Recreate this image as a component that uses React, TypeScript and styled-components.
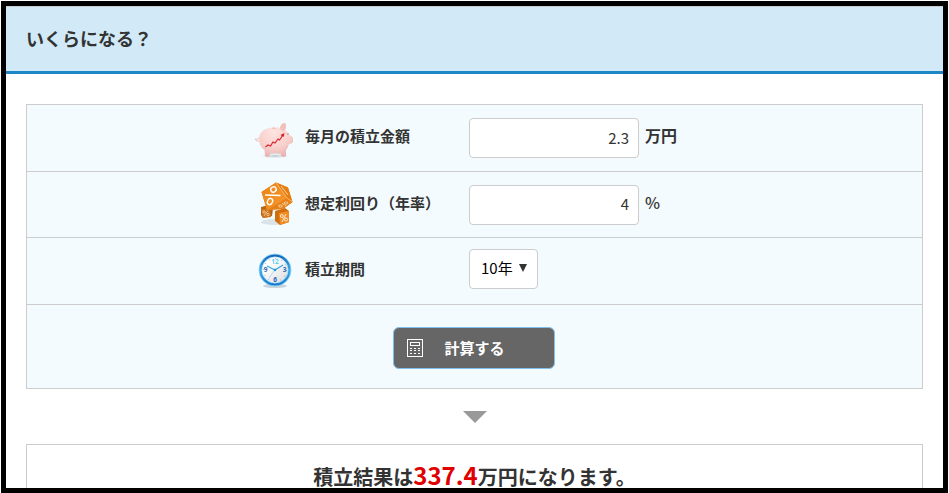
import React, { useState } from "react";
import styled, { createGlobalStyle } from "styled-components";

const GlobalStyle = createGlobalStyle`
  *, *::before, *::after { box-sizing: border-box; }
  body {
    margin: 0;
    background: #fff;
    color: #333;
    font-family: "Noto Sans CJK JP", sans-serif;
  }
  button, input, select { font-family: inherit; }
`;

const Frame = styled.main`
  height: calc(100vh - 1px);
  margin: 1px 1px 0;
  border: 5px solid #000;
  overflow: hidden;
`;

const Header = styled.header`
  padding: 18px 20px 19px;
  border-top: 1px solid #ccc;
  border-bottom: 3px solid #1e88c7;
  background: #d2eaf7;
`;

const Title = styled.h1`
  margin: 0;
  font-size: 18px;
  line-height: 27px;
  font-weight: 700;
`;

const Content = styled.div`
  padding: 30px 20px;
`;

const Panel = styled.form`
  border: 1px solid #ccc;
  background: #f3fbff;
`;

const Row = styled.div<{ $compact?: boolean }>`
  display: grid;
  grid-template-columns: 1fr 1fr;
  align-items: center;
  min-height: ${(p) => (p.$compact ? 66 : 67)}px;
  padding-right: 11px;
  border-bottom: 1px solid #ccc;
`;

const Label = styled.label`
  display: flex;
  align-items: center;
  justify-self: end;
  gap: 10px;
  width: 214px;
  font-size: 15px;
  line-height: 24px;
  font-weight: 700;

  span { padding-bottom: 4px; }
`;

const IconBox = styled.svg`
  flex: none;
  width: 40px;
  height: 48px;
`;

const Field = styled.div<{ $raised?: boolean }>`
  display: flex;
  align-items: center;
  gap: 6px;
  padding-bottom: ${(p) => (p.$raised ? 4 : 0)}px;
`;

const NumberInput = styled.input`
  width: 170px;
  height: 40px;
  padding: 0 9px 2px;
  border: 1px solid #ccc;
  border-radius: 4px;
  background: #fff;
  color: #333;
  font-size: 15px;
  text-align: right;
`;

const Unit = styled.span<{ $strong?: boolean }>`
  padding-bottom: 6px;
  font-size: 16px;
  line-height: 24px;
  font-weight: ${(p) => (p.$strong ? 700 : 500)};
`;

const SelectWrap = styled.div`
  position: relative;
  display: flex;

  svg {
    position: absolute;
    right: 10px;
    top: 15px;
    width: 10px;
    height: 8px;
    pointer-events: none;
  }
`;

const Select = styled.select`
  appearance: none;
  height: 40px;
  padding: 0 24px 3px 11px;
  border: 1px solid #ccc;
  border-radius: 4px;
  background: #fff;
  color: #000;
  font-size: 15px;
`;

const Actions = styled.div`
  display: flex;
  justify-content: center;
  padding: 22px 2px 19px 0;
`;

const SubmitButton = styled.button`
  display: flex;
  align-items: center;
  gap: 22px;
  width: 162px;
  height: 42px;
  padding: 0 13px;
  border: 1px solid #7fc0ee;
  border-radius: 6px;
  background: #666;
  color: #fff;
  font-size: 15px;
  font-weight: 700;

  svg { flex: none; width: 16px; height: 18px; }
`;

const ButtonText = styled.span`
  padding-bottom: 2px;
`;

const DownArrow = styled.div`
  width: 24px;
  margin: 22px auto 21px;
  border: solid transparent;
  border-width: 12px 12px 0;
  border-top-color: #999;
`;

const Result = styled.section`
  padding: 12px 20px 30px;
  border: 1px solid #ccc;
  text-align: center;
`;

const ResultText = styled.p`
  margin: 0;
  font-size: 20px;
  line-height: 36px;
  font-weight: 700;
`;

const Amount = styled.strong`
  color: #e00000;
  font-size: 24px;
  font-weight: 700;
`;

const PigIcon = () => (
  <IconBox viewBox="0 0 40 48" aria-hidden="true">
    <defs>
      <radialGradient id="pig" cx=".45" cy=".25" r=".8">
        <stop offset="0" stopColor="#ffe4e0" />
        <stop offset=".6" stopColor="#f9d0cc" />
        <stop offset="1" stopColor="#e6aeac" />
      </radialGradient>
      <radialGradient id="pigShadow">
        <stop offset="0" stopColor="#b5c0c4" />
        <stop offset="1" stopColor="#f3fbff" stopOpacity="0" />
      </radialGradient>
    </defs>
    <ellipse cx="20" cy="42" rx="17" ry="3" fill="url(#pigShadow)" />
    <path d="M5 27Q1 28 0 25Q2 26 4 24" fill="none" stroke="#f0c1be" />
    <path d="M4 25C4 18 10 14 18 13.500Q22 13 25 14Q26 9 30 9Q32 12 30 16Q33 18 34 21Q38 22 38 25L38 28Q37 30 34 30Q33 34 31 36L31 42Q29 44 26 42L25 38Q20 40 15 38L15 42Q12 44 10 42L9.500 36Q4 32 4 25Z" fill="url(#pig)" />
    <path d="M25 14Q26 9 30 9Q32 12 30 16Q28 18 26 16Z" fill="#f2bfbb" />
    <path d="M17 15Q18 12 21 15" fill="#f7ccc8" stroke="#edb8b4" strokeWidth=".6" />
    <path d="M15 38Q20 40 25 38L25.500 40Q20 39 15 40Z" fill="#d49c99" opacity=".6" />
    <circle cx="33" cy="20" r=".7" fill="#9b7471" />
    <path d="M10.500 33L13 31L15.500 32L18 28L20 29L23 25L24.500 26L28 21" fill="none" stroke="#dc2730" strokeWidth="1.2" />
    <path d="M25.500 21L29.500 19L28.500 23Z" fill="#d71820" />
  </IconBox>
);

const CubeIcon = () => (
  <IconBox viewBox="0 0 40 48" aria-hidden="true">
    <defs>
      <linearGradient id="cubeFace" x2="1" y2="1">
        <stop stopColor="#ea8215" /><stop offset="1" stopColor="#f79a31" />
      </linearGradient>
    </defs>
    <ellipse cx="19" cy="41" rx="13" ry="3" fill="#c9d3d7" opacity=".6" />
    <path d="M6 26L14 24L18 28L17 35L8 37L6 34Z" fill="#b9640f" />
    <path d="M6 28L15 28L16 36L8 37Z" fill="#ce751f" />
    <path d="M20 30L30 27L34 30L34 41L25 44L20 40Z" fill="#cf6f10" />
    <path d="M24 32L34 30L34 41L25 44Z" fill="#f08c20" />
    <path d="M6.500 11L21 1.500L33 6.500L37.500 21L28 28L12 29Z" fill="#ef8610" />
    <path d="M6.500 11L21 1.500L32 17L12 29Z" fill="url(#cubeFace)" />
    <path d="M21 1.500L33 6.500L37.500 21L32 17Z" fill="#e87c0c" />
    <path d="M32 17L37.500 21L28 28L12 29Z" fill="#e58118" />
    <path d="M21 1.500L32 17L37 20.500" fill="none" stroke="#ffd09a" strokeWidth=".7" />
    <path d="M26 5L33 14" stroke="#fbd5a8" strokeWidth="1" />
    <g fill="none" stroke="#fff" strokeWidth="1.400">
      <ellipse cx="18.500" cy="8.500" rx="2.800" ry="2.500" transform="rotate(-25 18.500 8.500)" />
      <path d="M10 14L25.500 14.500" />
      <ellipse cx="15" cy="20.500" rx="2.500" ry="3.200" transform="rotate(25 15 20.500)" />
    </g>
    <g fill="none" stroke="#fbd9b3" strokeWidth=".8">
      <ellipse cx="25.500" cy="25" rx="2" ry="1.100" />
      <ellipse cx="31" cy="22" rx="2" ry="1.100" />
      <path d="M27 22L31 25" />
    </g>
    <g fill="none" stroke="#fff4e7" strokeWidth=".9">
      <circle cx="26.800" cy="35" r="1.500" /><circle cx="31" cy="38.500" r="1.500" />
      <path d="M31 33L27 41" />
    </g>
    <g fill="none" stroke="#f3d1ac" strokeWidth=".8">
      <circle cx="9" cy="31" r="1.200" /><circle cx="13" cy="33.500" r="1.200" />
      <path d="M13 29.500L9 35" />
    </g>
  </IconBox>
);

const ClockIcon = () => (
  <IconBox viewBox="0 0 40 48" aria-hidden="true">
    <defs>
      <linearGradient id="rim" x2="0" y2="1">
        <stop stopColor="#1767b8" /><stop offset=".5" stopColor="#3cacea" /><stop offset="1" stopColor="#1c7acb" />
      </linearGradient>
      <linearGradient id="face" x2="1" y2="1">
        <stop offset=".3" stopColor="#fff" /><stop offset="1" stopColor="#d5d7da" />
      </linearGradient>
    </defs>
    <ellipse cx="20" cy="39" rx="12" ry="2" fill="#aebdc6" opacity=".6" />
    <circle cx="20" cy="23" r="14.500" fill="url(#face)" stroke="url(#rim)" strokeWidth="2.600" />
    <circle cx="20" cy="23" r="16" fill="none" stroke="#6cc7f3" strokeWidth=".7" />
    <circle cx="20" cy="23" r="13" fill="none" stroke="#9bdcf5" strokeWidth=".6" />
    <circle cx="20" cy="23" r="11.500" fill="none" stroke="#7190a8" strokeWidth="1" strokeDasharray=".7 5.32" />
    <g fontFamily="Noto Sans, sans-serif" fontSize="6.500" fontWeight="700" textAnchor="middle" fill="#2c63b5">
      <text x="20" y="17" fill="#65cdf3">12</text>
      <text x="29.500" y="25">3</text><text x="20" y="35">6</text><text x="10.500" y="25">9</text>
    </g>
    <path d="M12 19L20 23L28 18" fill="none" stroke="#35a9e1" strokeWidth="1.200" />
    <path d="M21 21L14 31" stroke="#8cc8e6" strokeWidth=".6" />
    <circle cx="20" cy="23" r="1.200" fill="#2196d3" />
  </IconBox>
);

const CalculatorIcon = () => (
  <svg viewBox="0 0 16 18" aria-hidden="true" shapeRendering="crispEdges">
    <path d="M.5 .5H15.5V17.5H.5Z M3.5 3.5H12.5V6.5H3.5Z" fill="none" stroke="#fff" />
    <path d="M3 9.5H13M3 11.5H13M3 14.5H13" fill="none" stroke="#fff" strokeDasharray="2 2" />
  </svg>
);

export default function App() {
  const [monthly, setMonthly] = useState("2.3");
  const [rate, setRate] = useState("4");
  const [years, setYears] = useState("10");
  const [result, setResult] = useState("337.4");

  const calculate = (event: React.FormEvent) => {
    event.preventDefault();
    const amount = Number(monthly);
    const interest = Number(rate) / 1200;
    const months = Number(years) * 12;
    const total = interest === 0 ? amount * months : amount * ((Math.pow(1 + interest, months) - 1) / interest);
    setResult((Math.floor(total * 10) / 10).toFixed(1));
  };

  return (
    <>
      <GlobalStyle />
      <Frame>
        <Header><Title>いくらになる？</Title></Header>
        <Content>
          <Panel onSubmit={calculate}>
            <Row>
              <Label htmlFor="monthly"><PigIcon /><span>毎月の積立金額</span></Label>
              <Field>
                <NumberInput id="monthly" inputMode="decimal" value={monthly} onChange={(e) => setMonthly(e.target.value)} />
                <Unit $strong>万円</Unit>
              </Field>
            </Row>
            <Row $compact>
              <Label htmlFor="rate"><CubeIcon /><span>想定利回り（年率）</span></Label>
              <Field>
                <NumberInput id="rate" inputMode="decimal" value={rate} onChange={(e) => setRate(e.target.value)} />
                <Unit>%</Unit>
              </Field>
            </Row>
            <Row>
              <Label htmlFor="years"><ClockIcon /><span>積立期間</span></Label>
              <Field $raised>
                <SelectWrap>
                  <Select id="years" value={years} onChange={(e) => setYears(e.target.value)}>
                    <option value="10">10年</option>
                    <option value="20">20年</option>
                    <option value="30">30年</option>
                  </Select>
                  <svg viewBox="0 0 10 8" aria-hidden="true"><path d="M1 0H9L5 8Z" fill="#333" /></svg>
                </SelectWrap>
              </Field>
            </Row>
            <Actions>
              <SubmitButton type="submit"><CalculatorIcon /><ButtonText>計算する</ButtonText></SubmitButton>
            </Actions>
          </Panel>
          <DownArrow />
          <Result>
            <ResultText>積立結果は<Amount>{result}</Amount>万円になります。</ResultText>
          </Result>
        </Content>
      </Frame>
    </>
  );
}
